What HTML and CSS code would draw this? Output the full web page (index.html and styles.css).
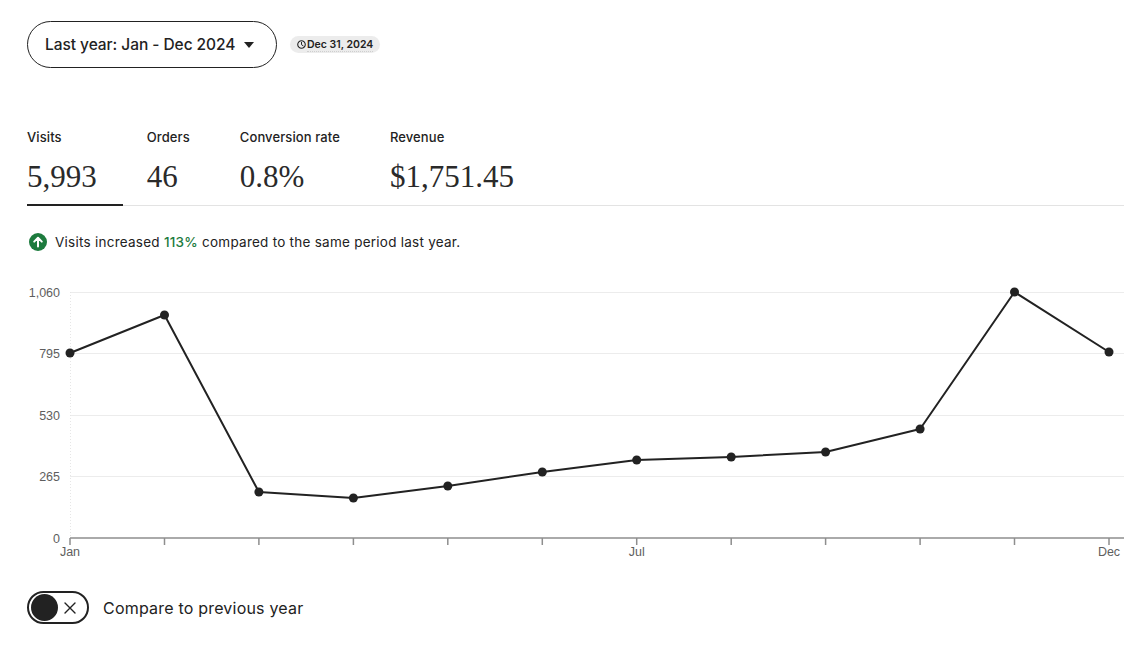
FILE: index.html
```html
<!DOCTYPE html>
<html lang="en">
<head>
<meta charset="utf-8">
<title>Stats</title>
<link rel="stylesheet" href="styles.css">
</head>
<body>
<main class="page">
  <div class="toolbar">
    <button class="range-btn">
      <span>Last year: Jan - Dec 2024</span>
      <svg class="caret" width="10" height="6" viewBox="0 0 10 6"><path d="M0 0h10L5 6z" fill="#222"/></svg>
    </button>
    <span class="badge">
      <svg class="clock" width="9" height="9" viewBox="0 0 10 10"><circle cx="5" cy="5" r="4.2" fill="none" stroke="#222" stroke-width="1.2"/><path d="M5 2.6V5.2L6.8 6.4" fill="none" stroke="#222" stroke-width="1.1" stroke-linecap="round"/></svg>
      <span class="badge-text">Dec 31, 2024</span>
    </span>
  </div>

  <div class="tabs">
    <div class="tab active">
      <div class="tab-label">Visits</div>
      <div class="tab-value">5,993</div>
    </div>
    <div class="tab">
      <div class="tab-label">Orders</div>
      <div class="tab-value">46</div>
    </div>
    <div class="tab">
      <div class="tab-label">Conversion rate</div>
      <div class="tab-value">0.8%</div>
    </div>
    <div class="tab">
      <div class="tab-label">Revenue</div>
      <div class="tab-value">$1,751.45</div>
    </div>
  </div>

  <p class="message">
    <svg class="up-icon" width="18" height="18" viewBox="0 0 18 18"><circle cx="9" cy="9" r="9" fill="#1d7b3e"/><path d="M9 13.5V5M5.2 8.6L9 4.8l3.8 3.8" fill="none" stroke="#fff" stroke-width="2" stroke-linecap="round" stroke-linejoin="round"/></svg>
    <span>Visits increased <strong class="green">113%</strong> compared to the same period last year.</span>
  </p>

  <svg class="chart" width="1097" height="282" viewBox="0 0 1097 282">
    <g class="grid" stroke="#ececec" stroke-width="1">
      <line x1="43" y1="12.5" x2="1097" y2="12.5"/>
      <line x1="43" y1="73.5" x2="1097" y2="73.5"/>
      <line x1="43" y1="135.5" x2="1097" y2="135.5"/>
      <line x1="43" y1="196.5" x2="1097" y2="196.5"/>
    </g>
    <line x1="43.5" y1="12" x2="43.5" y2="258" stroke="#e6e6e6" stroke-width="1" stroke-dasharray="1 2"/>
    <g font-family="'Liberation Sans', Arial, sans-serif" font-size="12.5" fill="#5e5e5e" text-anchor="end">
      <text x="33" y="16.5">1,060</text>
      <text x="33" y="78">795</text>
      <text x="33" y="139.5">530</text>
      <text x="33" y="201">265</text>
      <text x="33" y="262.5">0</text>
    </g>
    <line x1="43" y1="258" x2="1097" y2="258" stroke="#8e8e8e" stroke-width="1.5"/>
    <g stroke="#8e8e8e" stroke-width="1.5">
      <line x1="43" y1="258" x2="43" y2="265"/>
      <line x1="137.5" y1="258" x2="137.5" y2="265"/>
      <line x1="231.9" y1="258" x2="231.9" y2="265"/>
      <line x1="326.4" y1="258" x2="326.4" y2="265"/>
      <line x1="420.8" y1="258" x2="420.8" y2="265"/>
      <line x1="515.3" y1="258" x2="515.3" y2="265"/>
      <line x1="609.7" y1="258" x2="609.7" y2="265"/>
      <line x1="704.2" y1="258" x2="704.2" y2="265"/>
      <line x1="798.6" y1="258" x2="798.6" y2="265"/>
      <line x1="893.1" y1="258" x2="893.1" y2="265"/>
      <line x1="987.5" y1="258" x2="987.5" y2="265"/>
      <line x1="1082" y1="258" x2="1082" y2="265"/>
    </g>
    <g font-family="'Liberation Sans', Arial, sans-serif" font-size="12.5" fill="#5e5e5e" text-anchor="middle">
      <text x="43" y="276">Jan</text>
      <text x="609.7" y="276">Jul</text>
      <text x="1082" y="276">Dec</text>
    </g>
    <polyline fill="none" stroke="#222" stroke-width="2" stroke-linejoin="round"
      points="43,73 137.5,35 231.9,212 326.4,218 420.8,206 515.3,192 609.7,180 704.2,177 798.6,172 893.1,149 987.5,12 1082,72"/>
    <g fill="#222">
      <circle cx="43" cy="73" r="4.5"/>
      <circle cx="137.5" cy="35" r="4.5"/>
      <circle cx="231.9" cy="212" r="4.5"/>
      <circle cx="326.4" cy="218" r="4.5"/>
      <circle cx="420.8" cy="206" r="4.5"/>
      <circle cx="515.3" cy="192" r="4.5"/>
      <circle cx="609.7" cy="180" r="4.5"/>
      <circle cx="704.2" cy="177" r="4.5"/>
      <circle cx="798.6" cy="172" r="4.5"/>
      <circle cx="893.1" cy="149" r="4.5"/>
      <circle cx="987.5" cy="12" r="4.5"/>
      <circle cx="1082" cy="72" r="4.5"/>
    </g>
  </svg>

  <div class="compare">
    <span class="toggle">
      <span class="knob"></span>
      <svg class="x-icon" width="12" height="12" viewBox="0 0 12 12"><path d="M1 1l10 10M11 1L1 11" stroke="#222" stroke-width="1.4" stroke-linecap="round"/></svg>
    </span>
    <span class="compare-label">Compare to previous year</span>
  </div>
</main>
</body>
</html>
```

FILE: styles.css
```css
* { box-sizing: border-box; }
html, body { margin: 0; padding: 0; background: #fff; }
body {
  font-family: Inter, "Noto Sans", "Liberation Sans", sans-serif;
  color: #222;
}
.page {
  padding: 21px 18px 0 27px;
  width: 1142px;
}
.toolbar {
  display: flex;
  align-items: center;
  gap: 13px;
}
.range-btn {
  display: flex;
  align-items: center;
  gap: 9px;
  height: 47px;
  width: 250px;
  padding: 0 0 0 17px;
  border: 1px solid #222;
  border-radius: 24px;
  background: #fff;
  font-family: inherit;
  font-size: 15.5px;
  font-weight: 500;
  color: #222;
  letter-spacing: -0.05px;
}
.caret { margin-top: 1px; }
.badge {
  display: inline-flex;
  align-items: center;
  gap: 1px;
  height: 17px;
  padding: 0 7px 0 7px;
  background: #ececec;
  border-radius: 9px;
  font-size: 10.5px;
  font-weight: 600;
  color: #222;
}
.badge-text {
  border-bottom: 1px dotted #cfcfcf;
  line-height: 12px;
  margin-top: 1px;
}
.tabs {
  display: flex;
  margin-top: 61px;
  border-bottom: 1px solid #e3e3e3;
}
.tab {
  padding-right: 26px;
  margin-right: 24px;
  padding-bottom: 9px;
  border-bottom: 2px solid transparent;
  margin-bottom: -1px;
}
.tab.active { border-bottom-color: #222; }
.tab-label {
  font-size: 13px;
  font-weight: 500;
  line-height: 16px;
  margin-bottom: 14px;
  letter-spacing: 0.1px;
}
.tab-value {
  font-family: "Liberation Serif", "DejaVu Serif", serif;
  font-size: 31px;
  line-height: 36px;
  font-weight: 400;
  color: #2a2a2a;
}
.message {
  display: flex;
  align-items: center;
  gap: 8px;
  margin: 27px 0 0 2px;
  font-size: 13.5px;
  line-height: 18px;
  color: #222;
  letter-spacing: 0.25px;
}
.green { color: #1d7b3e; font-weight: 500; }
.chart {
  display: block;
  margin-top: 29px;
}
.compare {
  display: flex;
  align-items: center;
  gap: 14px;
  margin-top: 29px;
}
.toggle {
  display: flex;
  align-items: center;
  justify-content: space-between;
  width: 62px;
  height: 33px;
  padding: 0 11px 0 2px;
  border: 2px solid #222;
  border-radius: 17px;
}
.knob {
  width: 27px;
  height: 27px;
  border-radius: 50%;
  background: #222;
}
.compare-label {
  font-size: 16px;
  color: #222;
  letter-spacing: 0.2px;
}
```
